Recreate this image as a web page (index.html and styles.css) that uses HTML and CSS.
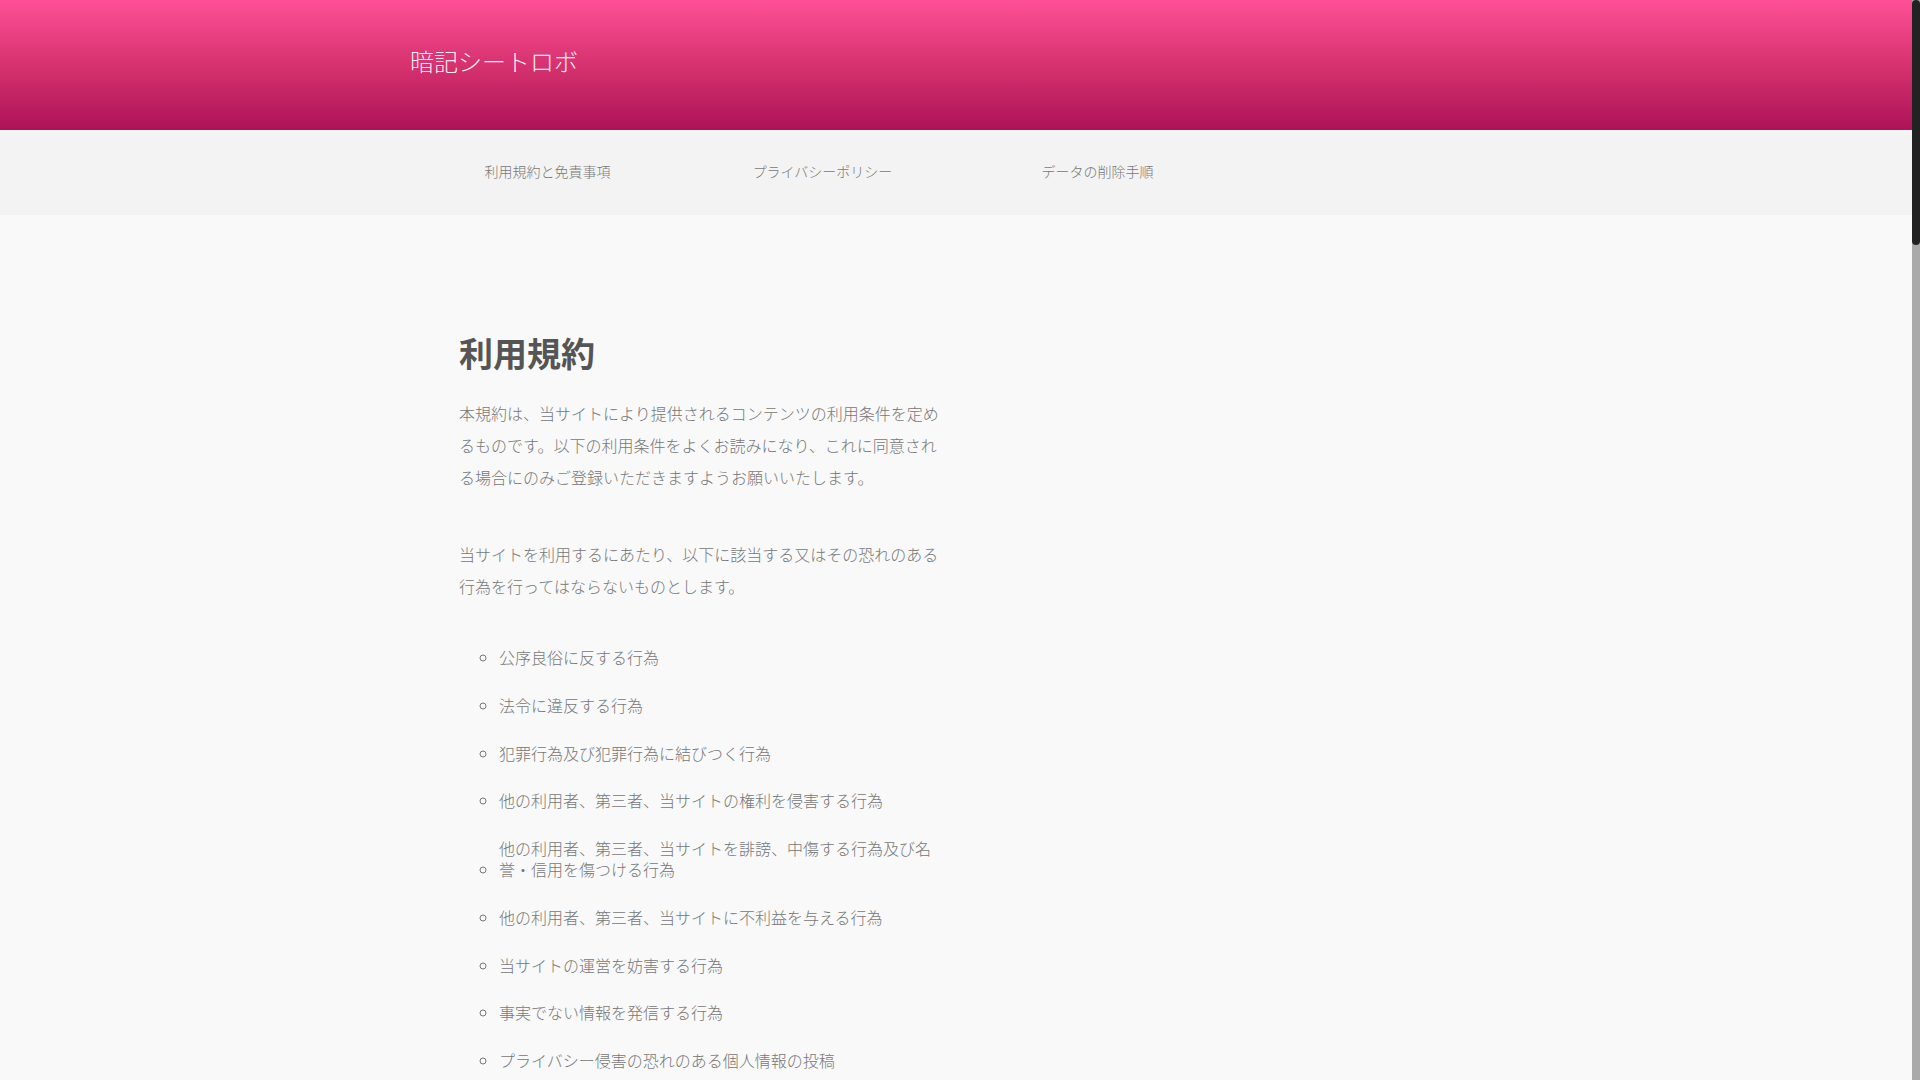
FILE: index.html
```html
<!DOCTYPE html>
<html lang="ja">
<head>
<meta charset="utf-8">
<title>利用規約 | 暗記シートロボ</title>
<link rel="stylesheet" href="styles.css">
</head>
<body>
<header class="site-header">
  <div class="wrap">
    <div class="logo">暗記シートロボ</div>
  </div>
</header>
<nav class="site-nav">
  <div class="wrap nav-list">
    <a class="nav-item" href="#">利用規約と免責事項</a>
    <a class="nav-item" href="#">プライバシーポリシー</a>
    <a class="nav-item" href="#">データの削除手順</a>
  </div>
</nav>
<main class="site-main">
  <div class="wrap">
    <article class="content">
      <h1 class="title">利用規約</h1>
      <p class="text">本規約は、当サイトにより提供されるコンテンツの利用条件を定めるものです。以下の利用条件をよくお読みになり、これに同意される場合にのみご登録いただきますようお願いいたします。</p>
      <p class="text">当サイトを利用するにあたり、以下に該当する又はその恐れのある行為を行ってはならないものとします。</p>
      <ul class="rules">
        <li><span class="rule">公序良俗に反する行為</span></li>
        <li><span class="rule">法令に違反する行為</span></li>
        <li><span class="rule">犯罪行為及び犯罪行為に結びつく行為</span></li>
        <li><span class="rule">他の利用者、第三者、当サイトの権利を侵害する行為</span></li>
        <li><span class="rule">他の利用者、第三者、当サイトを誹謗、中傷する行為及び名誉・信用を傷つける行為</span></li>
        <li><span class="rule">他の利用者、第三者、当サイトに不利益を与える行為</span></li>
        <li><span class="rule">当サイトの運営を妨害する行為</span></li>
        <li><span class="rule">事実でない情報を発信する行為</span></li>
        <li><span class="rule">プライバシー侵害の恐れのある個人情報の投稿</span></li>
        <li><span class="rule">その他、当サイトが不適当と判断する行為</span></li>
      </ul>
    </article>
  </div>
</main>
<div class="scrollbar" aria-hidden="true"><div class="scrollbar-thumb"></div></div>
</body>
</html>
```
FILE: styles.css
```css
html {
  background: #f9f9f9;
}
body {
  margin: 0;
  font-family: "Noto Sans CJK JP", "Noto Sans", sans-serif;
  color: #777777;
  background: #f9f9f9;
}
.wrap {
  width: 1100px;
  margin: 0 auto;
}
.site-header {
  height: 130px;
  background: linear-gradient(to bottom, #ff5097 0%, #d6326f 50%, #ad1357 100%);
  display: flex;
  align-items: center;
}
.logo {
  font-size: 24px;
  font-weight: 200;
  line-height: 1;
  color: rgba(255, 255, 255, 0.92);
  padding-bottom: 8px;
}
.site-nav {
  height: 85px;
  background: #f3f3f3;
  display: flex;
  align-items: center;
}
.nav-list {
  display: flex;
  padding-bottom: 4px;
}
.nav-item {
  width: 275px;
  text-align: center;
  font-size: 14px;
  font-weight: 300;
  line-height: 20px;
  color: #777777;
  text-decoration: none;
}
.content {
  width: 486px;
  padding: 114px 0 0 49px;
}
.title {
  margin: 0 0 20px;
  font-size: 34px;
  line-height: 48px;
  font-weight: 700;
  color: #555555;
}
.text {
  margin: 0 0 45px;
  font-size: 16px;
  font-weight: 300;
  line-height: 32px;
}
.rules {
  margin: 0;
  padding-left: 40px;
  list-style: circle;
  font-size: 16px;
  font-weight: 300;
}
.rules li {
  line-height: 20.8px;
  margin-bottom: 27px;
}
.rule {
  display: inline-block;
}
.scrollbar {
  position: fixed;
  top: 0;
  right: 0;
  width: 8px;
  height: 100%;
  background: #aaaaaa;
}
.scrollbar-thumb {
  height: 245px;
  background: #222222;
  border-radius: 4px;
}
```
